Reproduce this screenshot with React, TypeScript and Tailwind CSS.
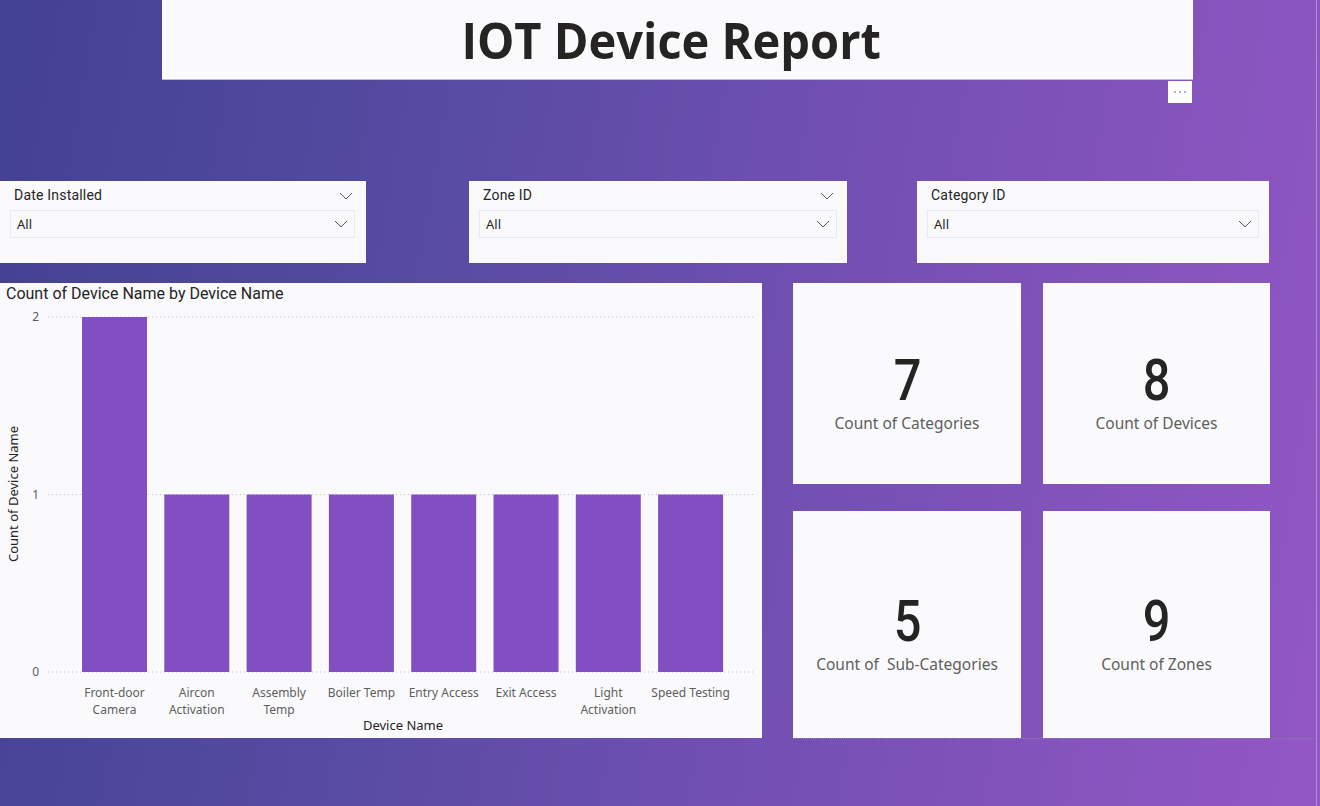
import React from "react";

const bars = [
  { label: ["Front-door", "Camera"], value: 2 },
  { label: ["Aircon", "Activation"], value: 1 },
  { label: ["Assembly", "Temp"], value: 1 },
  { label: ["Boiler Temp"], value: 1 },
  { label: ["Entry Access"], value: 1 },
  { label: ["Exit Access"], value: 1 },
  { label: ["Light", "Activation"], value: 1 },
  { label: ["Speed Testing"], value: 1 },
];

const cards = [
  { value: "7", label: "Count of Categories" },
  { value: "8", label: "Count of Devices" },
  { value: "5", label: "Count of  Sub-Categories" },
  { value: "9", label: "Count of Zones" },
];

const Chevron = ({ className = "" }: { className?: string }) => (
  <svg width="14" height="8" viewBox="0 0 14 8" className={className}>
    <polyline points="1,1 7,7 13,1" fill="none" stroke="#605e5c" strokeWidth="1" />
  </svg>
);

type SlicerProps = {
  title: string;
  width: string;
  headerChevron?: boolean;
  boxInset: string;
};

const Slicer = ({ title, width, headerChevron = true, boxInset }: SlicerProps) => (
  <div className={`${width} h-[82px] bg-[#fafafc] flex flex-col`}>
    <div className="h-[28px] pl-[14px] pr-[13px] pt-[5px] flex items-start justify-between">
      <span className="font-['Roboto',sans-serif] text-[14px] leading-[18px] tracking-[0.2px] text-[#252423]">
        {title}
      </span>
      {headerChevron && <Chevron className="mt-[6px]" />}
    </div>
    <div
      className={`${boxInset} mt-[1px] h-[28px] border border-[#e9e8ec] flex items-center justify-between pl-[6px] pr-[6px] pt-[2px]`}
    >
      <span className="font-['Noto_Sans',sans-serif] text-[13px] text-[#252423]">All</span>
      <Chevron className="-mt-[2px]" />
    </div>
  </div>
);

const BarChart = () => {
  const yFor = (v: number) => 367 - v * 177.5;
  return (
    <div className="w-[762px] h-[455px] bg-[#fafafc] flex flex-col">
      <div className="h-[22px] pl-[6px] pt-[1px] font-['Roboto',sans-serif] text-[16px] leading-[20px] text-[#252423]">
        Count of Device Name by Device Name
      </div>
      <svg width="762" height="433" className="block">
        {[0, 1, 2].map((v) => (
          <g key={v}>
            <line
              x1="48"
              x2="756"
              y1={yFor(v)}
              y2={yFor(v)}
              stroke="#c8c6c4"
              strokeDasharray="1 3"
            />
            <text
              x="39"
              y={yFor(v) + 4}
              textAnchor="end"
              fontFamily="Noto Sans, sans-serif"
              fontSize="12"
              fill="#605e5c"
            >
              {v}
            </text>
          </g>
        ))}
        {bars.map((b, i) => {
          const x = 82 + i * 82.3;
          const top = yFor(b.value);
          return (
            <g key={i}>
              <rect x={x} y={top} width="65" height={367 - top} fill="#814fc1" />
              {b.label.map((line, j) => (
                <text
                  key={j}
                  x={x + 32.5}
                  y={392 + j * 17}
                  textAnchor="middle"
                  fontFamily="Noto Sans, sans-serif"
                  fontSize="12"
                  fill="#605e5c"
                >
                  {line}
                </text>
              ))}
            </g>
          );
        })}
        <text
          x="403"
          y="425"
          textAnchor="middle"
          fontFamily="Noto Sans, sans-serif"
          fontSize="13"
          fill="#252423"
        >
          Device Name
        </text>
        <text
          transform="translate(18 189) rotate(-90)"
          textAnchor="middle"
          fontFamily="Noto Sans, sans-serif"
          fontSize="13"
          fill="#252423"
        >
          Count of Device Name
        </text>
      </svg>
    </div>
  );
};

const Card = ({ value, label }: { value: string; label: string }) => (
  <div className="bg-[#fafafc] flex flex-col items-center justify-center pt-[18px]">
    <div className="font-['Roboto',sans-serif] font-medium text-[58px] leading-[56px] text-[#252423] scale-x-[0.84]">
      {value}
    </div>
    <div className="mt-[5px] font-['Noto_Sans',sans-serif] text-[15.5px] leading-[20px] text-[#605e5c] whitespace-pre">
      {label}
    </div>
  </div>
);

export default function App() {
  return (
    <div className="w-[1320px] h-[806px] overflow-hidden bg-[linear-gradient(100deg,#434191_0%,#554ba2_30%,#7450b3_62%,#9357c5_100%)]">
      <div className="w-[1317px] h-full border-r border-[#ab8fd6]">
        <div className="h-[740px] flex flex-col">
          {/* Title */}
          <div className="ml-[162px] w-[1031px] h-[80px] pr-[13px] bg-[#fafafc] border-b border-[#c4bcd8] flex items-center justify-center">
            <h1 className="font-['Open_Sans',sans-serif] font-bold text-[50px] leading-none text-[#252423] scale-x-[0.94]">
              IOT Device Report
            </h1>
          </div>
          <div className="ml-[1168px] mt-[1px] w-[24px] h-[22px] bg-white flex items-center justify-center gap-[3px]">
            <span className="w-[2px] h-[2px] rounded-full bg-[#a98ad2]" />
            <span className="w-[2px] h-[2px] rounded-full bg-[#a98ad2]" />
            <span className="w-[2px] h-[2px] rounded-full bg-[#a98ad2]" />
          </div>

          {/* Slicers */}
          <div className="mt-[78px] flex">
            <Slicer title="Date Installed" width="w-[366px]" boxInset="ml-[10px] mr-[11px]" />
            <div className="ml-[103px]">
              <Slicer title="Zone ID" width="w-[378px]" boxInset="mx-[10px]" />
            </div>
            <div className="ml-[70px]">
              <Slicer title="Category ID" width="w-[352px]" headerChevron={false} boxInset="mx-[10px]" />
            </div>
          </div>

          {/* Chart + cards */}
          <div className="mt-[20px] flex">
            <BarChart />
            <div className="ml-[31px] flex flex-col">
              <div className="grid grid-cols-[228px_227px] grid-rows-[201px_227px] gap-x-[22px] gap-y-[27px]">
                {cards.map((c) => (
                  <Card key={c.value} {...c} />
                ))}
              </div>
              <div className="-mr-[46px] border-b border-dotted border-[#8f7db3]" />
            </div>
          </div>
        </div>
      </div>
    </div>
  );
}
